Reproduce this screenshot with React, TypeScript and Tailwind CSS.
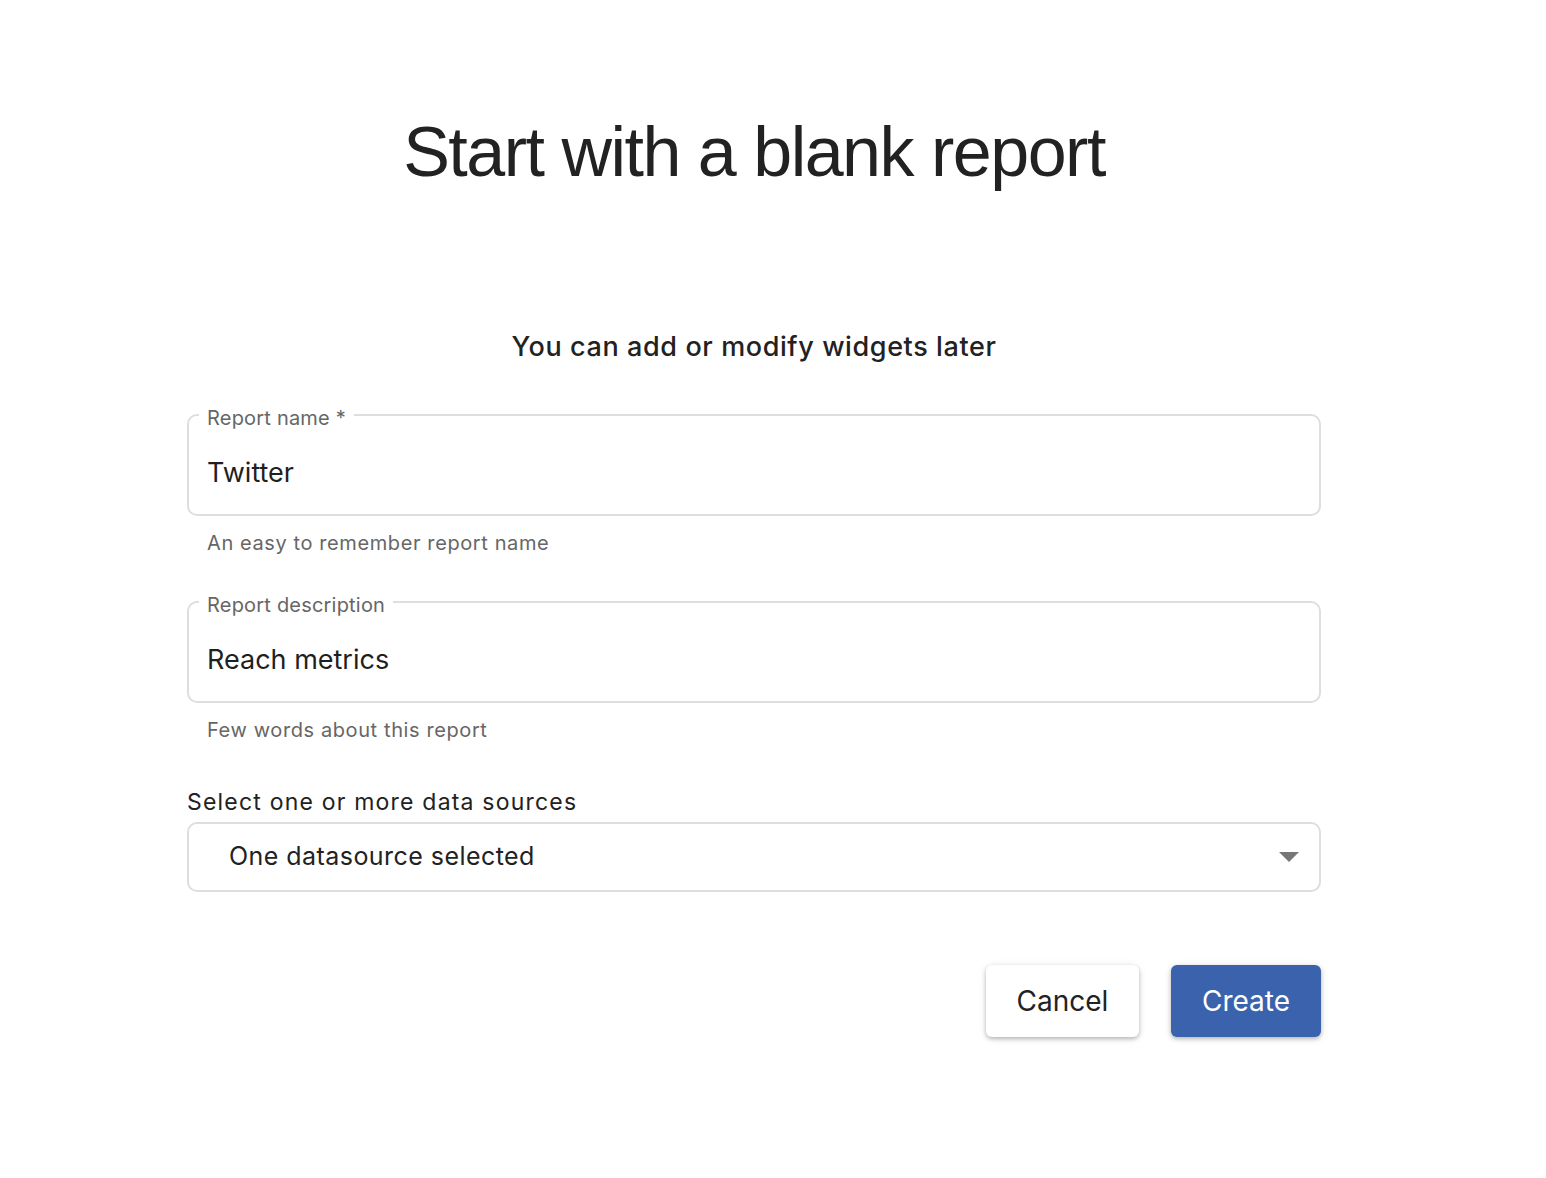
const font = { fontFamily: 'Inter, "Noto Sans", sans-serif' }

function OutlinedField({ label, value, helper }: { label: string; value: string; helper: string }) {
  return (
    <div>
      <fieldset className="rounded-[10px] border-2 border-[#dedede] px-[18px] pt-[26px] pb-[21px]">
        <legend className="ml-[-8px] px-[8px] text-[20px] leading-[24px] tracking-[0.2px] text-[#666666]">
          <span className="relative top-[3px]">{label}</span>
        </legend>
        <input
          className="h-[40px] w-full bg-transparent text-[27px] text-[#1f1f1f] outline-none"
          defaultValue={value}
        />
      </fieldset>
      <p className="mt-[15px] pl-[20px] text-[20px] leading-[24px] tracking-[0.03em] text-[#666666]">{helper}</p>
    </div>
  )
}

export default function App() {
  return (
    <div className="min-h-screen bg-white" style={font}>
      <div className="mx-auto w-[1134px] -translate-x-[19px] pt-[106px]">
        {/* Title */}
        <h1
          className="text-center text-[70px] leading-[92px] tracking-[-1.5px] text-[#222222]"
          style={{ fontFamily: '"Liberation Sans", Arial, sans-serif' }}
        >
          Start with a blank report
        </h1>

        <p className="mt-[133px] text-center text-[27px] leading-[32px] font-medium tracking-[0.6px] text-[#222222]">
          You can add or modify widgets later
        </p>

        {/* Form */}
        <div className="mt-[40px]">
          <OutlinedField label="Report name *" value="Twitter" helper="An easy to remember report name" />
          <div className="mt-[35px]">
            <OutlinedField label="Report description" value="Reach metrics" helper="Few words about this report" />
          </div>

          <p className="mt-[46px] text-[23px] leading-[28px] tracking-[1.2px] text-[#222222]">
            Select one or more data sources
          </p>
          <div className="mt-[6px] flex h-[70px] items-center justify-between rounded-[10px] border-2 border-[#dedede] pl-[40px] pr-[20px]">
            <span className="text-[25px] tracking-[0.45px] text-[#222222]">One datasource selected</span>
            <svg width="20" height="10" viewBox="0 0 20 10">
              <path d="M0 0 L20 0 L10 10 Z" fill="#777777" />
            </svg>
          </div>

          {/* Actions */}
          <div className="mt-[73px] flex justify-end gap-[32px]">
            <button className="h-[72px] w-[153px] rounded-[6px] bg-white text-[28px] text-[#222222] shadow-[0_2px_4px_rgba(0,0,0,0.25),0_1px_10px_rgba(0,0,0,0.08)]">
              Cancel
            </button>
            <button className="h-[72px] w-[150px] rounded-[6px] bg-[#3b63ad] text-[28px] text-white shadow-[0_2px_4px_rgba(0,0,0,0.25),0_1px_10px_rgba(0,0,0,0.08)]">
              Create
            </button>
          </div>
        </div>
      </div>
    </div>
  )
}
